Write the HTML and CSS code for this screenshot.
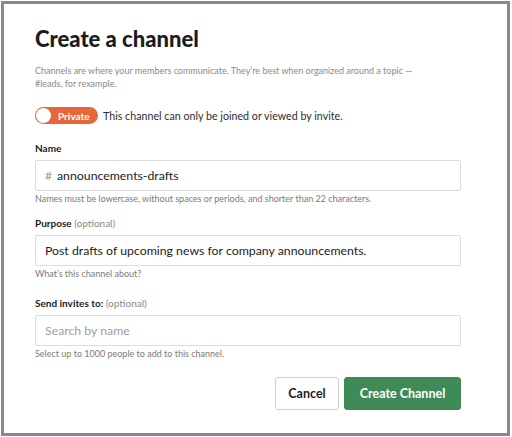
FILE: index.html
```html
<!DOCTYPE html>
<html>
<head>
<meta charset="utf-8">
<link rel="stylesheet" href="styles.css">
</head>
<body>
<div class="frame">
  <h1 class="title">Create a channel</h1>
  <p class="desc">Channels are where your members communicate. They’re best when organized around a topic —<br>#leads, for rexample.</p>
  <div class="toggle-row">
    <div class="toggle"><span class="knob"></span><span class="toggle-label">Private</span></div>
    <span class="toggle-text">This channel can only be joined or viewed by invite.</span>
  </div>
  <div class="field field-first">
    <div class="label">Name</div>
    <div class="input"><span class="hash">#</span><span class="value">announcements-drafts</span></div>
    <div class="help">Names must be lowercase, without spaces or periods, and shorter than 22 characters.</div>
  </div>
  <div class="field">
    <div class="label">Purpose <span class="opt">(optional)</span></div>
    <div class="input"><span class="value">Post drafts of upcoming news for company announcements.</span></div>
    <div class="help">What’s this channel about?</div>
  </div>
  <div class="field field-last">
    <div class="label">Send invites to: <span class="opt">(optional)</span></div>
    <div class="input"><span class="placeholder">Search by name</span></div>
    <div class="help">Select up to 1000 people to add to this channel.</div>
  </div>
  <div class="actions">
    <button class="btn btn-cancel">Cancel</button>
    <button class="btn btn-create">Create Channel</button>
  </div>
</div>
</body>
</html>
```
FILE: styles.css
```css
* { box-sizing: border-box; }
html, body { margin: 0; padding: 0; background: #fff; }
body { font-family: Lato, "Noto Sans", sans-serif; color: #1d1c1d; }

.frame {
  margin: 1px;
  width: 509px;
  height: 435px;
  border: 3px solid #8d8888;
  padding: 22px 46px 0 31px;
  display: flex;
  flex-direction: column;
}

.title {
  margin: 0;
  font-size: 22px;
  line-height: 26px;
  font-weight: 900;
  color: #1d1c1d;
}

.desc {
  margin: 12px 0 0;
  font-size: 9px;
  line-height: 13px;
  color: #8a8a8a;
}

.toggle-row {
  margin-top: 17px;
  display: flex;
  align-items: center;
  gap: 5px;
  height: 17px;
}
.toggle {
  width: 63px;
  height: 17px;
  border-radius: 9px;
  background: #e8673a;
  display: flex;
  align-items: center;
  padding: 0 0 0 1px;
}
.knob {
  width: 15px;
  height: 15px;
  border-radius: 50%;
  background: #fff;
  flex: none;
}
.toggle-label {
  color: #fff;
  font-weight: 700;
  font-size: 10px;
  margin-left: 7px;
}
.toggle-text {
  font-size: 10.7px;
  color: #2c2d30;
}

.field { margin-top: 11px; display: flex; flex-direction: column; }
.field-first { margin-top: 17px; }
.field-last { margin-top: 16px; }

.label {
  font-size: 10px;
  line-height: 14px;
  font-weight: 700;
  color: #1d1c1d;
}
.opt { font-weight: 400; color: #8a8a8a; }

.input {
  margin-top: 5px;
  height: 31px;
  border: 1px solid #dcdcdc;
  border-radius: 2px;
  display: flex;
  align-items: center;
  padding: 0 9px;
  font-size: 12.3px;
}
.hash { color: #9a9a9a; margin-right: 5px; font-size: 12px; }
.value { color: #1d1c1d; }
.placeholder { color: #a0a0a0; }

.help {
  margin-top: 2px;
  font-size: 9px;
  line-height: 12px;
  color: #7a7a7a;
}

.actions {
  margin-top: 17px;
  display: flex;
  justify-content: flex-end;
  gap: 5px;
}
.btn {
  height: 33px;
  border-radius: 3px;
  font-family: Lato, "Noto Sans", sans-serif;
  font-size: 12.5px;
  font-weight: 700;
  padding: 0;
  cursor: pointer;
}
.btn-cancel {
  width: 64px;
  background: #fff;
  border: 1px solid #cfcfcf;
  color: #1d1c1d;
}
.btn-create {
  width: 117px;
  background: #3f8b57;
  border: 1px solid #3f8b57;
  color: #fff;
}
```
